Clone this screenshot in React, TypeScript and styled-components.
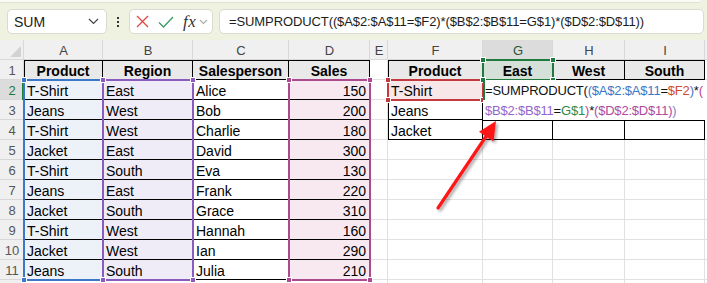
import styled, { createGlobalStyle } from 'styled-components';

const GlobalStyle = createGlobalStyle`
  * { box-sizing: border-box; }
  body {
    margin: 0;
    background: #fff;
    font-family: 'Liberation Sans', Arial, sans-serif;
  }
`;

// J is only a 2px sliver at the right edge, so its letter is not shown
const LETTERS = ['A', 'B', 'C', 'D', 'E', 'F', 'G', 'H', 'I', ''];

const SALES: string[][] = [
  ['Product', 'Region', 'Salesperson', 'Sales'],
  ['T-Shirt', 'East', 'Alice', '150'],
  ['Jeans', 'West', 'Bob', '200'],
  ['T-Shirt', 'West', 'Charlie', '180'],
  ['Jacket', 'East', 'David', '300'],
  ['T-Shirt', 'South', 'Eva', '130'],
  ['Jeans', 'East', 'Frank', '220'],
  ['Jacket', 'South', 'Grace', '310'],
  ['T-Shirt', 'West', 'Hannah', '160'],
  ['Jacket', 'West', 'Ian', '290'],
  ['Jeans', 'South', 'Julia', '210'],
];

const SUMMARY: string[][] = [
  ['Product', 'East', 'West', 'South'],
  ['T-Shirt', '', '', ''],
  ['Jeans', '', '', ''],
  ['Jacket', '', '', ''],
];

const BLUE = '#3b78c9';
const PURPLE = '#8b5cc0';
const MAGENTA = '#ab4a8e';
const RED = '#c23a3f';
const GREEN = '#1f7a3e';

const FORMULA =
  '=SUMPRODUCT(($A$2:$A$11=$F2)*($B$2:$B$11=G$1)*($D$2:$D$11))';

const LINE_ONE: [string, string][] = [
  ['=SUMPRODUCT(', '#111'],
  ['(', BLUE],
  ['$A$2:$A$11', BLUE],
  ['=', '#111'],
  ['$F2', '#d44a2e'],
  [')', BLUE],
  ['*', '#111'],
  ['(', '#c2448c'],
];

const LINE_TWO: [string, string][] = [
  ['$B$2:$B$11', '#9466cc'],
  ['=', '#111'],
  ['G$1', '#2e8b4a'],
  [')', '#c2448c'],
  ['*', '#111'],
  ['(', '#b04aa0'],
  ['$D$2:$D$11', '#b04aa0'],
  [')', '#b04aa0'],
  [')', '#8a7fd0'],
];

function App() {
  const cells = [];
  for (let r = 1; r <= 12; r++) {
    for (let c = 0; c < 10; c++) {
      const inSales = c <= 3 && r <= 11;
      const inSummary = c >= 5 && c <= 8 && r <= 4;
      const table = inSales || inSummary;
      let text = '';
      if (inSales) text = SALES[r - 1][c];
      if (inSummary) text = SUMMARY[r - 1][c - 5];

      let fill = '#fff';
      if (r === 1 && table) fill = c === 6 ? '#d5e1d8' : '#e9e9e9';
      else if (inSales && c === 0) fill = '#edf1f8';
      else if (inSales && c === 1) fill = '#efebf7';
      else if (inSales && c === 3) fill = '#f8e9f1';
      else if (c === 5 && r === 2) fill = '#f8e7e8';

      cells.push(
        <Cell
          key={`${r}-${c}`}
          $col={c + 2}
          $row={r + 1}
          $fill={fill}
          $table={table}
          $top={table && (r === 1 || (r === 4 && c >= 6))}
          $left={table && (c === 0 || c === 5)}
          $head={table && r === 1}
          $right={inSales && c === 3 && r > 1}
        >
          {text}
        </Cell>
      );
    }
  }

  return (
    <Page>
      <GlobalStyle />
      <Toolbar>
        <RibbonEdge />
        <Bar>
          <NameBox>
            <span>SUM</span>
            <svg width="11" height="7" viewBox="0 0 11 7">
              <path d="M1 1 L5.5 5.5 L10 1" fill="none" stroke="#444" strokeWidth="1.2" />
            </svg>
          </NameBox>
          <Grip>
            <i />
            <i />
            <i />
          </Grip>
          <EntryBox>
            <svg width="13" height="13" viewBox="0 0 13 13">
              <path d="M1 1 L12 12 M12 1 L1 12" stroke="#e2463f" strokeWidth="1.3" />
            </svg>
            <svg width="16" height="12" viewBox="0 0 16 12">
              <path d="M1 6.5 L5.5 11 L15 1" fill="none" stroke="#3b9a62" strokeWidth="1.3" />
            </svg>
            <Fx>fx</Fx>
            <svg width="9" height="6" viewBox="0 0 9 6">
              <path d="M1 1 L4.5 4.5 L8 1" fill="none" stroke="#aaa" strokeWidth="1.1" />
            </svg>
          </EntryBox>
          <FormulaBox>{FORMULA}</FormulaBox>
        </Bar>
      </Toolbar>

      <Sheet>
        <Corner />
        {LETTERS.map((l, i) => (
          <ColHead key={i} $col={i + 2} $active={l === 'G'}>
            {l}
          </ColHead>
        ))}
        {Array.from({ length: 12 }, (_, i) => (
          <RowHead key={i} $row={i + 2} $active={i === 1}>
            {i < 11 ? i + 1 : ''}
          </RowHead>
        ))}
        {cells}

        <Range $cols="2 / 3" $rows="3 / 13" $color={BLUE}>
          <Handle $v="top" $h="left" $color={BLUE} />
          <Handle $v="bottom" $h="left" $color={BLUE} />
        </Range>
        <Range $cols="3 / 4" $rows="3 / 13" $color={PURPLE}>
          <Handle $v="top" $h="left" $color={PURPLE} />
          <Handle $v="top" $h="right" $color={PURPLE} />
          <Handle $v="bottom" $h="left" $color={PURPLE} />
          <Handle $v="bottom" $h="right" $color={PURPLE} />
        </Range>
        <Range $cols="5 / 6" $rows="3 / 13" $color={MAGENTA}>
          <Handle $v="top" $h="left" $color={MAGENTA} />
          <Handle $v="top" $h="right" $color={MAGENTA} />
          <Handle $v="bottom" $h="left" $color={MAGENTA} />
          <Handle $v="bottom" $h="right" $color={MAGENTA} />
        </Range>
        <Range $cols="7 / 8" $rows="3 / 4" $color={RED}>
          <Handle $v="top" $h="left" $color={RED} />
          <Handle $v="top" $h="right" $color={RED} />
          <Handle $v="bottom" $h="left" $color={RED} />
          <Handle $v="bottom" $h="right" $color={RED} />
        </Range>
        <Range $cols="8 / 9" $rows="2 / 3" $color={GREEN}>
          <Handle $v="top" $h="left" $color={GREEN} />
          <Handle $v="top" $h="right" $color={GREEN} />
          <Handle $v="bottom" $h="left" $color={GREEN} />
          <Handle $v="bottom" $h="right" $color={GREEN} />
        </Range>

        <Editor>
          <EditLine $caret>
            {LINE_ONE.map(([t, col], i) => (
              <Token key={i} $color={col}>
                {t}
              </Token>
            ))}
          </EditLine>
          <EditLine>
            {LINE_TWO.map(([t, col], i) => (
              <Token key={i} $color={col}>
                {t}
              </Token>
            ))}
          </EditLine>
        </Editor>
      </Sheet>

      <Arrow width="707" height="283" viewBox="0 0 707 283">
        <defs>
          <filter id="shade" x="-20%" y="-20%" width="140%" height="140%">
            <feDropShadow dx="2" dy="2" stdDeviation="1.5" floodColor="#000" floodOpacity="0.35" />
          </filter>
        </defs>
        <g filter="url(#shade)">
          <line x1="438" y1="208" x2="487" y2="135" stroke="#ff1414" strokeWidth="3.2" strokeLinecap="round" />
          <polygon points="496,121 493.5,141.5 479,131.8" fill="#ff1414" />
        </g>
      </Arrow>
    </Page>
  );
}

export default App;

const Page = styled.div`
  position: relative;
  width: 707px;
  height: 283px;
  overflow: hidden;
  background: #fff;
`;

const Toolbar = styled.div`
  height: 40px;
  background: #eff1e1;
  display: flex;
  flex-direction: column;
`;

const RibbonEdge = styled.div`
  height: 3px;
  margin-right: 6px;
  background: #fafbf4;
  border-bottom: 1px solid #dfe1d2;
  border-bottom-right-radius: 4px;
`;

const Bar = styled.div`
  display: flex;
  align-items: center;
  padding: 6px 0 0 7px;
`;

const NameBox = styled.div`
  width: 100px;
  height: 25px;
  display: flex;
  align-items: center;
  justify-content: space-between;
  padding: 0 7px 0 6px;
  background: #fff;
  border: 1px solid #d9dbd0;
  border-radius: 5px;
  font-size: 14px;
  color: #1c1c1c;
`;

const Grip = styled.div`
  width: 22px;
  display: flex;
  flex-direction: column;
  align-items: center;
  gap: 2px;

  i {
    display: block;
    width: 2px;
    height: 2px;
    background: #333;
  }
`;

const EntryBox = styled.div`
  width: 84px;
  height: 25px;
  display: flex;
  align-items: center;
  padding: 0 3px 0 6px;
  gap: 9px;
  background: #fff;
  border: 1px solid #d9dbd0;
  border-radius: 5px;

  svg:last-child {
    margin-left: -6px;
  }
`;

const Fx = styled.span`
  font-family: 'Liberation Serif', 'Times New Roman', serif;
  font-style: italic;
  font-size: 17px;
  color: #333;
  letter-spacing: 0.5px;
`;

const FormulaBox = styled.div`
  flex: 1;
  height: 25px;
  margin: 0 3px 0 6px;
  padding-left: 9px;
  display: flex;
  align-items: center;
  background: #fff;
  border: 1px solid #d9dbd0;
  border-radius: 5px;
  font-size: 13px;
  letter-spacing: -0.1px;
  color: #1c1c1c;
  white-space: nowrap;
  overflow: hidden;
`;

const Sheet = styled.div`
  display: grid;
  grid-template-columns: 24px 79px 90px 96px 81px 18px 95px 70px 72px 80px 1fr;
  grid-template-rows: repeat(13, 20px);
`;

const Corner = styled.div`
  grid-column: 1;
  grid-row: 1;
  position: relative;
  background: #f0f0f0;
  box-shadow: inset -1px -1px 0 #d8d8d8;

  &::after {
    content: '';
    position: absolute;
    right: 3px;
    bottom: 3px;
    border-style: solid;
    border-width: 0 0 11px 11px;
    border-color: transparent transparent #d2d2d2 transparent;
  }
`;

const ColHead = styled.div<{ $col: number; $active?: boolean }>`
  grid-column: ${(p) => p.$col};
  grid-row: 1;
  display: flex;
  align-items: center;
  justify-content: center;
  font-size: 13px;
  color: ${(p) => (p.$active ? '#24573a' : '#444')};
  background: ${(p) => (p.$active ? '#dcdcdc' : '#f0f0f0')};
  box-shadow: inset -1px -1px 0 #d8d8d8;
`;

const RowHead = styled.div<{ $row: number; $active?: boolean }>`
  grid-column: 1;
  grid-row: ${(p) => p.$row};
  display: flex;
  align-items: center;
  justify-content: center;
  padding-top: 1px;
  font-size: 13px;
  color: ${(p) => (p.$active ? GREEN : '#555')};
  background: ${(p) => (p.$active ? '#dcdcdc' : '#f0f0f0')};
  box-shadow: ${(p) =>
    p.$active
      ? `inset -2px 0 0 ${GREEN}, inset 0 -1px 0 #d8d8d8`
      : 'inset -1px -1px 0 #d8d8d8'};
`;

const Cell = styled.div<{
  $col: number;
  $row: number;
  $fill: string;
  $table: boolean;
  $top: boolean;
  $left: boolean;
  $head: boolean;
  $right: boolean;
}>`
  grid-column: ${(p) => p.$col};
  grid-row: ${(p) => p.$row};
  padding: 1px 4px 0 3px;
  line-height: 20px;
  font-size: 14px;
  white-space: nowrap;
  overflow: hidden;
  color: #000;
  background: ${(p) => p.$fill};
  font-weight: ${(p) => (p.$head ? 700 : 400)};
  text-align: ${(p) => (p.$head ? 'center' : p.$right ? 'right' : 'left')};
  box-shadow: ${(p) =>
    [
      `inset -1px -1px 0 ${p.$table ? '#000' : '#e1e1e1'}`,
      p.$top ? 'inset 0 1px 0 #000' : '',
      p.$left ? 'inset 1px 0 0 #000' : '',
    ]
      .filter(Boolean)
      .join(', ')};
`;

const Range = styled.div<{ $cols: string; $rows: string; $color: string }>`
  grid-column: ${(p) => p.$cols};
  grid-row: ${(p) => p.$rows};
  margin: -1px;
  position: relative;
  border: 2px solid ${(p) => p.$color};
  pointer-events: none;
`;

const Handle = styled.span<{ $v: 'top' | 'bottom'; $h: 'left' | 'right'; $color: string }>`
  position: absolute;
  ${(p) => p.$v}: -4px;
  ${(p) => p.$h}: -4px;
  width: 6px;
  height: 6px;
  background: ${(p) => p.$color};
  border: 1px solid #fff;
`;

const Editor = styled.div`
  grid-column: 8 / -1;
  grid-row: 3 / 5;
  position: relative;
  background: #fff;
  z-index: 1;
`;

const EditLine = styled.div<{ $caret?: boolean }>`
  height: 20px;
  padding: 1px 0 0 2px;
  line-height: 20px;
  font-size: 13px;
  letter-spacing: -0.2px;
  white-space: nowrap;
  box-shadow: ${(p) => (p.$caret ? `inset 2px 0 0 ${GREEN}` : 'none')};
`;

const Token = styled.span<{ $color: string }>`
  color: ${(p) => p.$color};
`;

const Arrow = styled.svg`
  position: absolute;
  top: 0;
  left: 0;
  pointer-events: none;
  z-index: 2;
`;
